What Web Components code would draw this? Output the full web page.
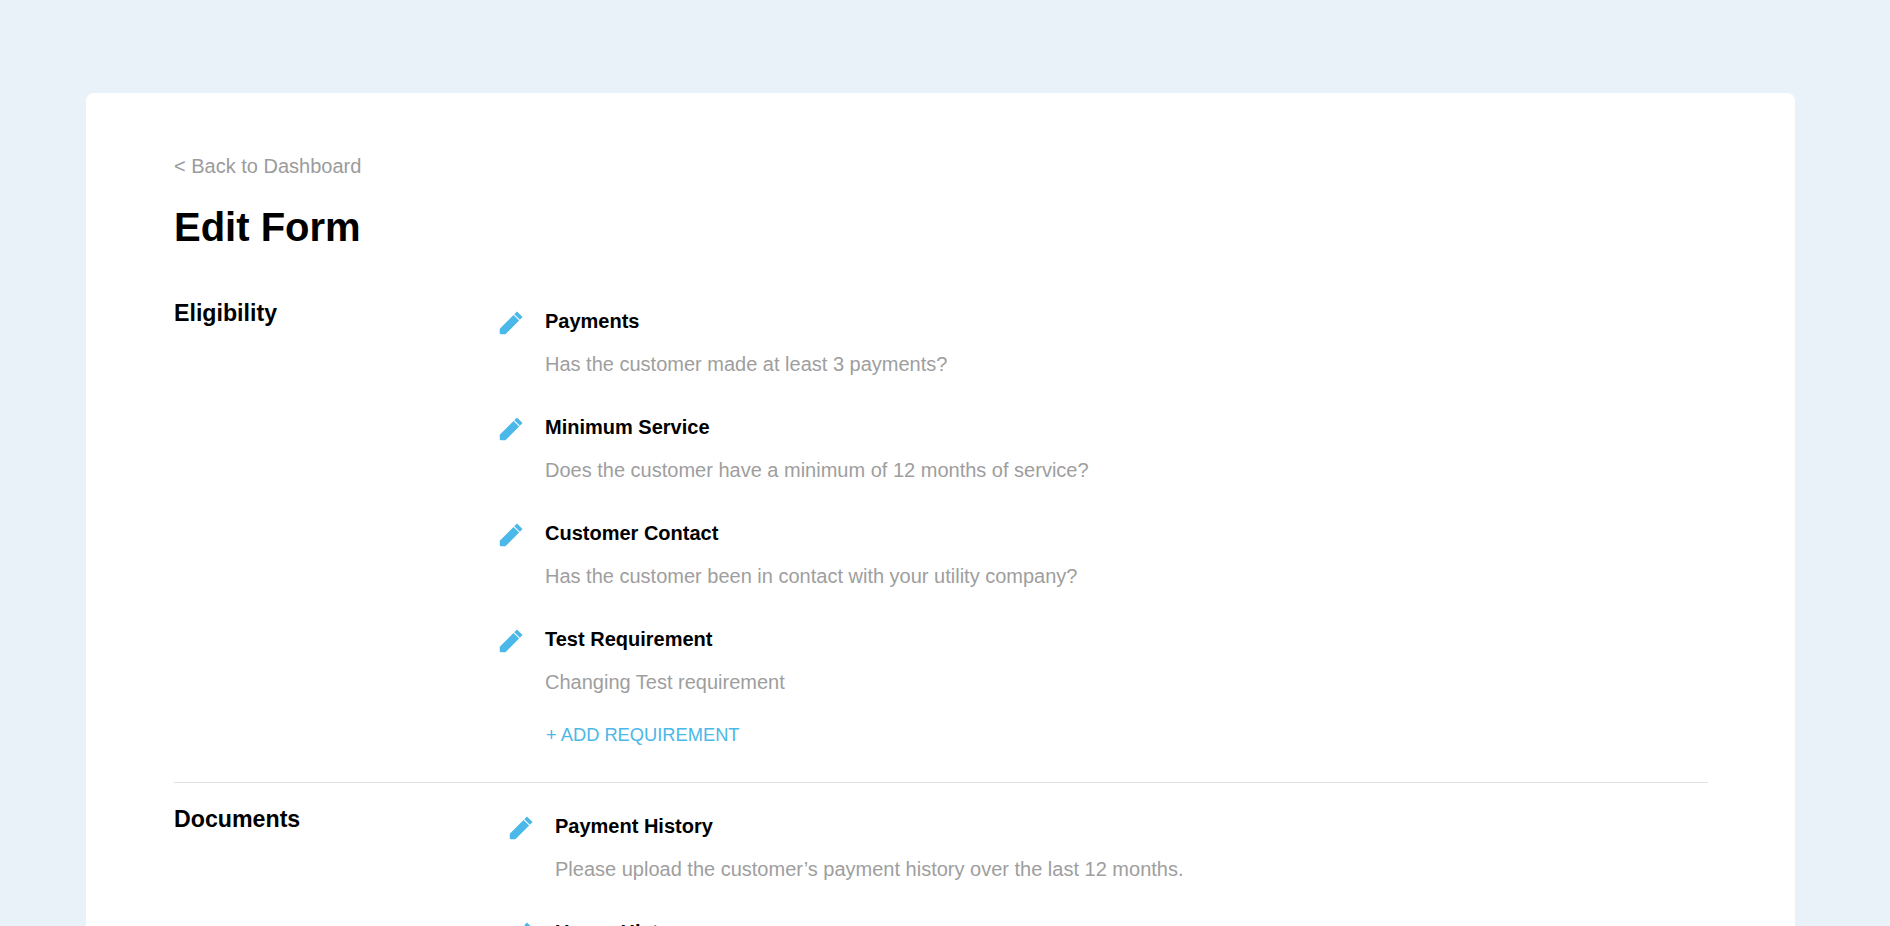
<!DOCTYPE html>
<html>
<head>
<meta charset="utf-8">
<title>Edit Form</title>
<style>
	html, body { height: 100%; overflow: hidden; }
	body {
		margin: 0;
		background: #e9f1f9;
		font-family: "Liberation Sans", Arial, sans-serif;
		color: #000;
	}
</style>
</head>
<body>
<form-card>
	<back-link>&lt; Back to Dashboard</back-link>
	<page-title>Edit Form</page-title>
	<form-section heading="Eligibility">
		<req-item name="Payments">Has the customer made at least 3 payments?</req-item>
		<req-item name="Minimum Service">Does the customer have a minimum of 12 months of service?</req-item>
		<req-item name="Customer Contact">Has the customer been in contact with your utility company?</req-item>
		<req-item name="Test Requirement">Changing Test requirement</req-item>
		<add-link>+ ADD REQUIREMENT</add-link>
	</form-section>
	<form-section heading="Documents" divided>
		<req-item name="Payment History">Please upload the customer’s payment history over the last 12 months.</req-item>
		<req-item name="Usage History">Please upload the customer’s usage history.</req-item>
	</form-section>
</form-card>
<script>
class FormCard extends HTMLElement {
	constructor() {
		super();
		this.attachShadow({ mode: "open" });
		this.shadowRoot.innerHTML = `<style>
			:host {
				display: block;
				margin: 93px 95px 0 86px;
				padding: 61px 87px 40px 88px;
				background: #fff;
				border-radius: 8px;
			}
		</style><slot></slot>`;
	}
}
customElements.define("form-card", FormCard);

class BackLink extends HTMLElement {
	constructor() {
		super();
		this.attachShadow({ mode: "open" });
		this.shadowRoot.innerHTML = `<style>
			:host {
				display: block;
				font-size: 20px;
				line-height: 24px;
				color: #9b9b9b;
			}
		</style><slot></slot>`;
	}
}
customElements.define("back-link", BackLink);

class PageTitle extends HTMLElement {
	constructor() {
		super();
		this.attachShadow({ mode: "open" });
		this.shadowRoot.innerHTML = `<style>
			:host {
				display: block;
				margin-top: 26px;
				font-size: 40px;
				line-height: 46px;
				font-weight: bold;
			}
		</style><slot></slot>`;
	}
}
customElements.define("page-title", PageTitle);

class FormSection extends HTMLElement {
	constructor() {
		super();
		this.attachShadow({ mode: "open" });
		this.shadowRoot.innerHTML = `<style>
			:host {
				display: grid;
				grid-template-columns: 324px 1fr;
				padding-top: 49px;
				padding-bottom: 36px;
			}
			:host([divided]) {
				border-top: 1px solid #e2e2e2;
				padding-top: 22px;
			}
			h2 {
				margin: 0;
				font-size: 23.2px;
				line-height: 28px;
			}
			:host([divided]) .items { padding-left: 10px; margin-top: -1px; }
		</style>
		<h2></h2>
		<div class="items"><slot></slot></div>`;
		this.shadowRoot.querySelector("h2").textContent = this.getAttribute("heading");
	}
}
customElements.define("form-section", FormSection);

class ReqItem extends HTMLElement {
	constructor() {
		super();
		this.attachShadow({ mode: "open" });
		this.shadowRoot.innerHTML = `<style>
			:host {
				display: grid;
				grid-template-columns: 47px 1fr;
				height: 106px;
			}
			svg { width: 30px; height: 30px; display: block; margin-top: 9px; margin-left: -2px; }
			.name { font-size: 20px; line-height: 24px; font-weight: bold; margin-top: 10px; }
			.desc { font-size: 20px; line-height: 24px; color: #9e9e9e; margin-top: 19px; }
		</style>
		<svg viewBox="0 0 24 24" fill="#4ab8e8"><path d="M3 16.5 14 5.5l4.5 4.5-11 11H4a1 1 0 0 1-1-1zM14.6 4.9l2.15-2.15 4.5 4.5L19.1 9.4z"/></svg>
		<div>
			<div class="name"></div>
			<div class="desc"><slot></slot></div>
		</div>`;
		this.shadowRoot.querySelector(".name").textContent = this.getAttribute("name");
	}
}
customElements.define("req-item", ReqItem);

class AddLink extends HTMLElement {
	constructor() {
		super();
		this.attachShadow({ mode: "open" });
		this.shadowRoot.innerHTML = `<style>
			:host {
				display: block;
				margin-left: 48px;
				margin-top: 1px;
				font-size: 18.3px;
				line-height: 22px;
				color: #4ab8e8;
			}
		</style><slot></slot>`;
	}
}
customElements.define("add-link", AddLink);
</script>
</body>
</html>
